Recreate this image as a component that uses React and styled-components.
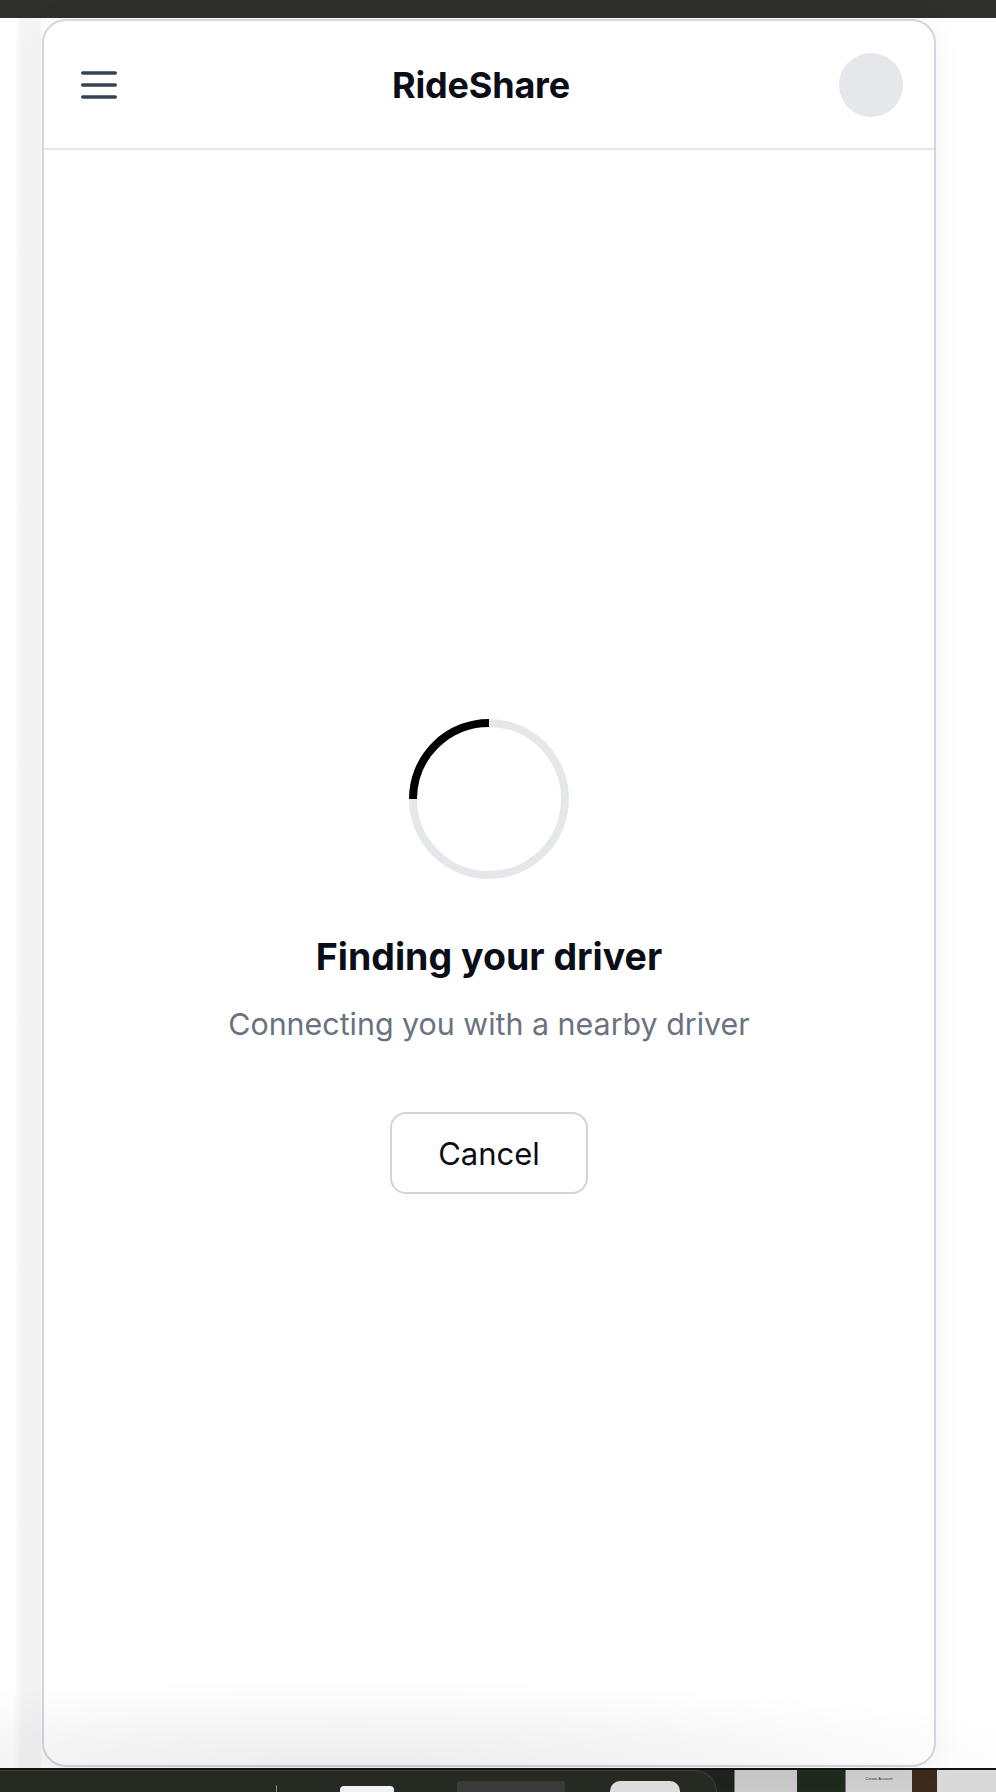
import React from "react";
import styled, { createGlobalStyle } from "styled-components";

const GlobalStyle = createGlobalStyle`
  html, body { margin: 0; padding: 0; background: #ffffff; }
  body { font-family: Inter, "Noto Sans", "Liberation Sans", sans-serif; -webkit-font-smoothing: antialiased; }
  * { box-sizing: border-box; }
`;

const Screen = styled.div`
  height: 1792px;
  display: flex;
  flex-direction: column;
  background: #ffffff;
  overflow: hidden;
`;

const MenuBar = styled.div`
  height: 18px;
  flex: none;
  background: #2f2f2d;
`;

const Stage = styled.div`
  position: relative;
  flex: 1;
  display: flex;
  padding: 1px 60px 1px 42px;
  background: linear-gradient(90deg, #ffffff 14px, #f4f4f4 22px, #f7f7f7 40px, #ffffff 42px);
`;

const DockShadow = styled.div`
  position: absolute;
  left: 0;
  right: 0;
  bottom: 0;
  height: 90px;
  pointer-events: none;
  background: radial-gradient(ellipse 75% 100% at 35% 100%, rgba(0, 0, 0, 0.075), rgba(0, 0, 0, 0) 100%);
`;

const Card = styled.div`
  flex: 1;
  display: flex;
  flex-direction: column;
  background: #ffffff;
  border: 2px solid #d3d6de;
  border-radius: 24px;
  overflow: hidden;
  box-shadow: 0 0 30px rgba(0, 0, 0, 0.05);
`;

const Header = styled.header`
  height: 129px;
  flex: none;
  display: flex;
  align-items: center;
  justify-content: space-between;
  padding: 0 31px;
  border-bottom: 2px solid #e5e7eb;
`;

const IconButton = styled.button`
  width: 48px;
  height: 48px;
  padding: 0;
  border: 0;
  background: transparent;
  display: flex;
  align-items: center;
  justify-content: center;
  color: #374151;
`;

const Title = styled.h1`
  margin: 0;
  font-size: 36px;
  line-height: 56px;
  font-weight: 700;
  color: #0b0d17;
  letter-spacing: -0.2px;
`;

const Avatar = styled.div`
  width: 64px;
  height: 64px;
  border-radius: 50%;
  background: #e5e7eb;
`;

const Content = styled.main`
  flex: 1;
  display: flex;
  flex-direction: column;
  align-items: center;
  justify-content: center;
  padding-bottom: 2px;
`;

const Spinner = styled.svg`
  width: 160px;
  height: 160px;
  display: block;
`;

const Heading = styled.h2`
  margin: 50px 0 0;
  font-size: 37.5px;
  line-height: 56px;
  font-weight: 700;
  color: #0b0d17;
`;

const Subtitle = styled.p`
  margin: 19px 0 0;
  font-size: 30.4px;
  line-height: 40px;
  color: #6b7280;
`;

const CancelButton = styled.button`
  margin-top: 68px;
  width: 198px;
  height: 82px;
  border: 2px solid #d1d5db;
  border-radius: 16px;
  background: #ffffff;
  font-family: inherit;
  font-size: 31px;
  color: #0b0d17;
  cursor: pointer;
`;

const Dock = styled.div`
  height: 24px;
  flex: none;
  display: flex;
  background: #1f231e;
  border-top: 2px solid #111;
`;

const DockPanel = styled.div`
  width: 717px;
  flex: none;
  position: relative;
  background: #262a22;
  border-top: 1px solid #3d4139;
  border-right: 1px solid #3d4139;
  border-top-right-radius: 24px;
`;

const DockItem = styled.div`
  position: absolute;
  left: ${(p) => p.$x}px;
  width: ${(p) => p.$w}px;
  top: ${(p) => p.$top}px;
  bottom: 0;
  background: ${(p) => p.$bg};
  border-radius: ${(p) => p.$r || 2}px ${(p) => p.$r || 2}px 0 0;
`;

const Thumb = styled.div`
  width: ${(p) => p.$w}px;
  flex: none;
  background: ${(p) => p.$bg};
  border-left: ${(p) => (p.$edge ? "1px solid #777" : "none")};
  display: flex;
  justify-content: center;
  font-family: "Liberation Sans", sans-serif;
  font-size: 4px;
  color: #333;
  padding-top: 6px;
`;

function MenuIcon() {
  return (
    <svg width="48" height="48" viewBox="0 0 48 48" fill="none">
      <path
        d="M7.7 12h32.6M7.7 24h32.6M7.7 36h32.6"
        stroke="currentColor"
        strokeWidth="3.4"
        strokeLinecap="round"
      />
    </svg>
  );
}

export default function App() {
  return (
    <>
      <GlobalStyle />
      <Screen>
        <MenuBar />
        <Stage>
          <Card>
            <Header>
              <IconButton aria-label="Menu">
                <MenuIcon />
              </IconButton>
              <Title>RideShare</Title>
              <Avatar />
            </Header>
            <Content>
              <Spinner viewBox="0 0 160 160">
                <circle cx="80" cy="80" r="76" fill="none" stroke="#e5e7eb" strokeWidth="8" />
                <path d="M4 80 A76 76 0 0 1 80 4" fill="none" stroke="#000000" strokeWidth="8" />
              </Spinner>
              <Heading>Finding your driver</Heading>
              <Subtitle>Connecting you with a nearby driver</Subtitle>
              <CancelButton>Cancel</CancelButton>
            </Content>
          </Card>
          <DockShadow />
        </Stage>
        <Dock>
          <DockPanel>
            <DockItem $x={276} $w={1} $top={14} $bg="#8a8a8a" />
            <DockItem $x={340} $w={54} $top={15} $bg="#f2f2f2" $r={4} />
            <DockItem $x={457} $w={108} $top={10} $bg="#3a3a3a" $r={3} />
            <DockItem $x={610} $w={70} $top={10} $bg="#dcdcdc" $r={10} />
          </DockPanel>
          <Thumb $w={17} $bg="#1f231e" />
          <Thumb $w={63} $bg="#c9c9c9" $edge />
          <Thumb $w={48} $bg="#1e2b1e" />
          <Thumb $w={67} $bg="#cfcfcf" $edge>Create Account</Thumb>
          <Thumb $w={25} $bg="#3e2a1a" />
          <Thumb $w={59} $bg="#d9d9d9" />
        </Dock>
      </Screen>
    </>
  );
}
